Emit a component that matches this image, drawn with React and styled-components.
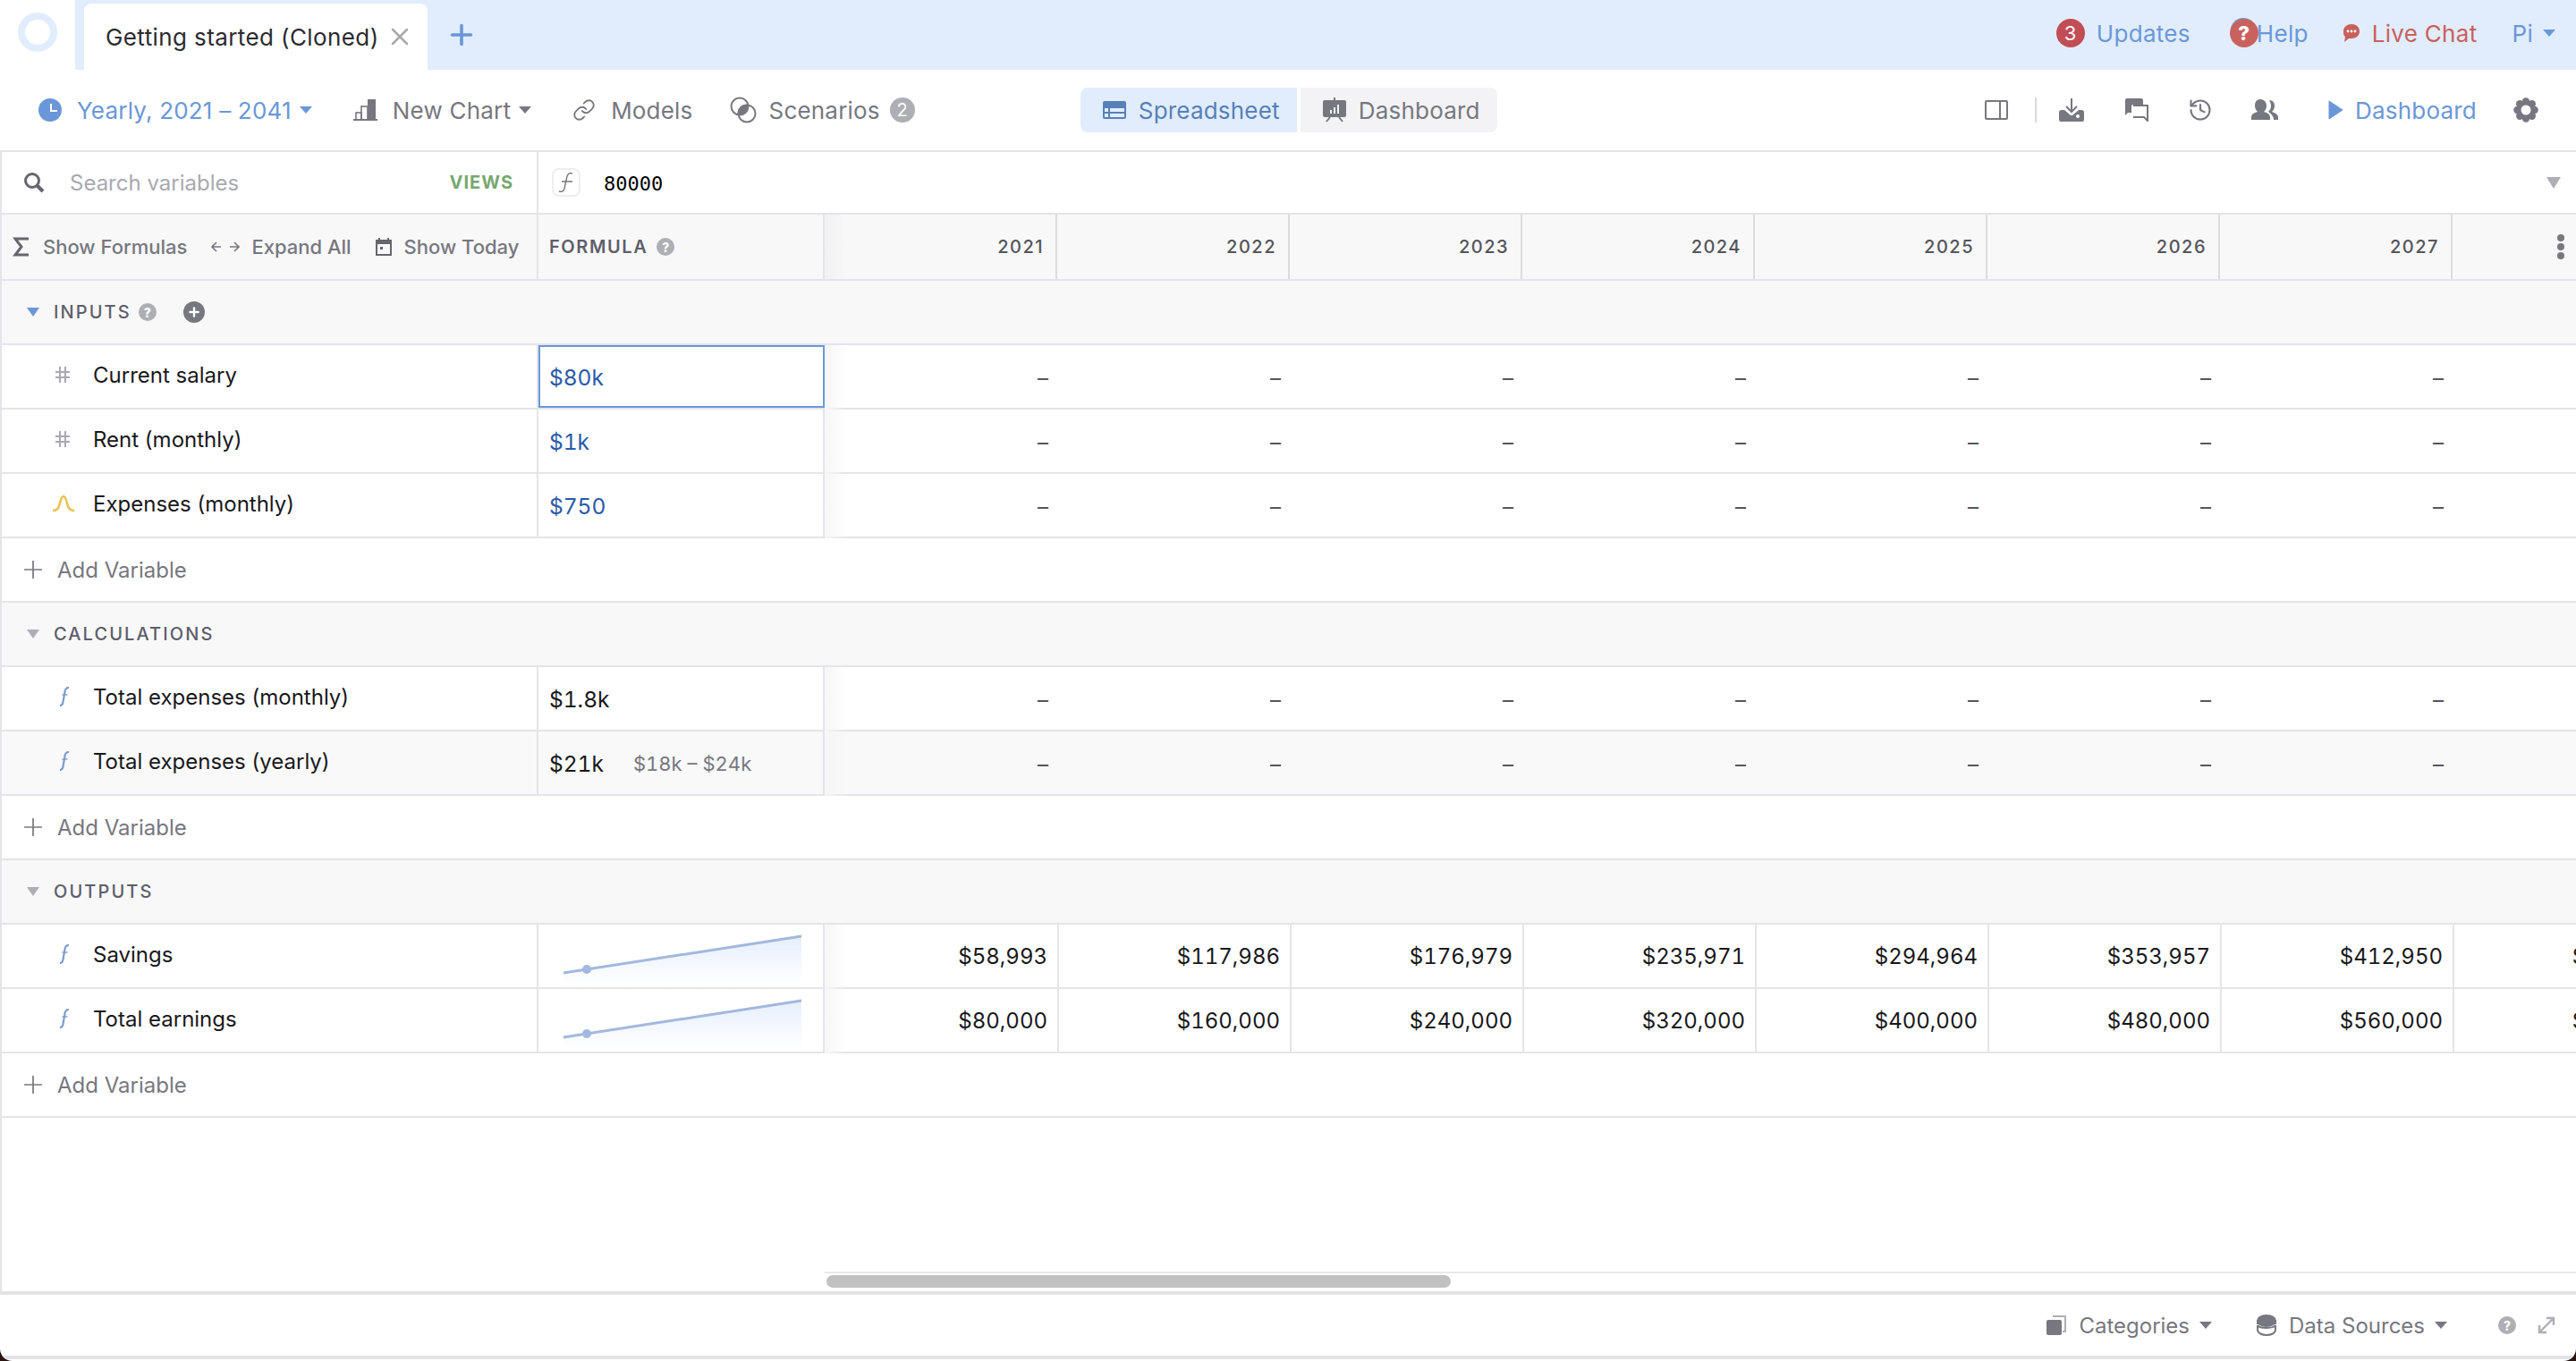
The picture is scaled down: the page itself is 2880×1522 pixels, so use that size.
import React from "react";
import styled, { createGlobalStyle } from "styled-components";
import { Link, History, Plus, X } from "lucide-react";

const GlobalStyle = createGlobalStyle`
  html, body { margin: 0; padding: 0; background: #2a1510; }
  * { box-sizing: border-box; }
`;

const BLUE = "#6a97d8";
const GREY = "#77777f";
const LINE = "#e4e4ea";

const Page = styled.div`
  width: 2880px;
  height: 1522px;
  display: flex;
  flex-direction: column;
  background: #fff;
  border-radius: 0 0 14px 14px;
  overflow: hidden;
  font-family: Inter, "Noto Sans", sans-serif;
  font-size: 24px;
  color: #18181b;
`;

/* tab strip */
const TabBar = styled.div`
  height: 78px;
  flex: none;
  display: flex;
  background: #e1edfc;
  font-size: 26px;
`;
const LogoSlot = styled.div`
  width: 84px;
  background: #fff;
  display: flex;
  align-items: center;
  justify-content: center;
  padding-bottom: 6px;
`;
const Ring = styled.div`
  width: 44px;
  height: 44px;
  border-radius: 50%;
  border: 8px solid #e1edfc;
`;
const DocTab = styled.div`
  width: 384px;
  margin: 4px 0 0 10px;
  padding-left: 24px;
  background: #fff;
  border-radius: 8px 8px 0 0;
  display: flex;
  align-items: center;
  gap: 7px;
  color: #2b2b30;
  letter-spacing: 0.4px;
  svg { color: #a9a9ae; }
`;
const AddTab = styled.div`
  margin-left: 20px;
  display: flex;
  align-items: center;
  color: ${BLUE};
`;
const TopLinks = styled.div`
  margin-left: auto;
  padding-right: 23px;
  display: flex;
  align-items: center;
  padding-bottom: 4px;
  letter-spacing: 0.3px;
`;
const TopLink = styled.div`
  display: flex;
  align-items: center;
  gap: ${(p) => p.$gap ?? 13}px;
  margin-left: ${(p) => p.$left ?? 0}px;
  color: ${(p) => p.$color ?? BLUE};
`;
const CountBadge = styled.span`
  width: 32px;
  height: 32px;
  border-radius: 50%;
  background: ${(p) => p.$bg};
  color: #fff;
  font-size: ${(p) => p.$size ?? 22}px;
  font-weight: ${(p) => p.$weight ?? 400};
  display: flex;
  align-items: center;
  justify-content: center;
  box-shadow: ${(p) => p.$shadow ?? "none"};
  position: relative;
  margin-right: ${(p) => p.$right ?? 0}px;
`;

const Caret = styled.span`
  width: 0;
  height: 0;
  flex: none;
  border-left: ${(p) => (p.$size ?? 14) / 2}px solid transparent;
  border-right: ${(p) => (p.$size ?? 14) / 2}px solid transparent;
  border-top: ${(p) => (p.$size ?? 14) * (p.$ratio ?? 0.58)}px solid ${(p) => p.$color ?? GREY};
  margin-left: ${(p) => p.$left ?? 0}px;
`;

/* main toolbar */
const Toolbar = styled.div`
  height: 92px;
  flex: none;
  display: flex;
  align-items: center;
  padding: 0 42px 0 43px;
  border-bottom: 2px solid ${LINE};
  font-size: 26px;
  letter-spacing: 0.2px;
`;
const ToolItem = styled.div`
  display: flex;
  align-items: center;
  gap: ${(p) => p.$gap ?? 17}px;
  margin-left: ${(p) => p.$left ?? 0}px;
  color: ${(p) => p.$color ?? GREY};
`;
const Count = styled.span`
  width: 28px;
  height: 28px;
  border-radius: 50%;
  background: #aeaeb5;
  color: #fff;
  font-size: 20px;
  display: flex;
  align-items: center;
  justify-content: center;
  margin-left: -3px;
`;
const ViewTabs = styled.div`
  display: flex;
  gap: 4px;
  margin-left: 185px;
`;
const ViewTab = styled.div`
  height: 50px;
  width: ${(p) => p.$width}px;
  padding-left: 25px;
  display: flex;
  align-items: center;
  gap: 14px;
  background: ${(p) => (p.$active ? "#e1edfc" : "#f3f3f5")};
  color: ${(p) => (p.$active ? "#5680b8" : GREY)};
  border-radius: ${(p) => (p.$active ? "8px 0 0 8px" : "0 8px 8px 0")};
`;
const ToolRight = styled.div`
  margin-left: auto;
  display: flex;
  align-items: center;
`;
const Divider = styled.span`
  width: 2px;
  height: 28px;
  background: #d8d8dd;
  margin: 0 25px 0 30px;
`;
const IconSlot = styled.span`
  display: flex;
  margin-left: ${(p) => p.$left ?? 0}px;
  color: ${GREY};
`;

/* formula bar */
const FormulaBar = styled.div`
  height: 70px;
  flex: none;
  display: flex;
  border-left: 2px solid ${LINE};
  border-bottom: 2px solid ${LINE};
`;
const SearchBox = styled.div`
  width: 598px;
  display: flex;
  align-items: center;
  padding: 0 26px 0 24px;
  gap: 28px;
  color: #a9a9b0;
`;
const Views = styled.span`
  margin-left: auto;
  color: #77a86f;
  font-weight: 700;
  font-size: 20px;
  letter-spacing: 1px;
`;
const FormulaInput = styled.div`
  flex: 1;
  display: flex;
  align-items: center;
  border-left: 2px solid ${LINE};
  padding: 0 17px 0 15px;
`;
const FnBox = styled.span`
  width: 32px;
  height: 32px;
  border: 2px solid #eeeef0;
  border-radius: 8px;
  display: flex;
  align-items: center;
  justify-content: center;
  color: ${GREY};
`;
const Mono = styled.span`
  margin-left: 26px;
  font-family: "DejaVu Sans Mono", monospace;
  font-size: 22px;
  color: #000;
  padding-top: 2px;
`;

/* sheet */
const Sheet = styled.div`
  flex: 1;
  min-height: 0;
  border-left: 2px solid ${LINE};
  overflow: hidden;
  display: flex;
  flex-direction: column;
`;
const HeadRow = styled.div`
  height: 74px;
  flex: none;
  display: flex;
  background: #f8f8f8;
  border-bottom: 2px solid ${LINE};
`;
const HeadTools = styled.div`
  width: 598px;
  flex: none;
  display: flex;
  align-items: center;
  padding-left: 12px;
  font-size: 22px;
  font-weight: 500;
  color: ${GREY};
`;
const HeadTool = styled.div`
  display: flex;
  align-items: center;
  gap: ${(p) => p.$gap}px;
  margin-left: ${(p) => p.$left ?? 0}px;
`;
const HeadFormula = styled.div`
  width: 322px;
  flex: none;
  display: flex;
  align-items: center;
  gap: 10px;
  padding-left: 12px;
  border-left: 2px solid ${LINE};
  border-right: 2px solid ${LINE};
  font-size: 20px;
  font-weight: 600;
  letter-spacing: 1.6px;
  color: #5e5e6b;
`;
const YearsHead = styled.div`
  display: flex;
  flex: none;
  background: linear-gradient(90deg, #f1f1f3, #f8f8f8) no-repeat left / 22px 100%;
`;
const YearHead = styled.div`
  width: 260px;
  flex: none;
  display: flex;
  align-items: center;
  justify-content: flex-end;
  padding-right: 13px;
  border-right: 2px solid #dcdcdf;
  font-size: 20px;
  font-weight: 500;
  letter-spacing: 1.5px;
  color: #55555c;
`;
const Kebab = styled.span`
  position: absolute;
  left: 2859px;
  top: 272px;
  width: 8px;
  height: 8px;
  border-radius: 50%;
  background: ${GREY};
  box-shadow: 0 -10px 0 ${GREY}, 0 10px 0 ${GREY};
`;

const GroupRow = styled.div`
  height: 72px;
  flex: none;
  display: flex;
  align-items: center;
  padding: 0 0 0 28px;
  background: #f8f8f8;
  border-bottom: 2px solid ${LINE};
`;
const GroupLabel = styled.span`
  margin-left: 16px;
  font-size: 20px;
  font-weight: 500;
  letter-spacing: 2.1px;
  color: #5e5e6b;
`;
const AddRow = styled.div`
  height: 72px;
  flex: none;
  display: flex;
  align-items: center;
  gap: 11px;
  padding-left: 19px;
  border-bottom: 2px solid ${LINE};
  color: ${GREY};
`;
const VarRow = styled.div`
  height: 72px;
  flex: none;
  display: flex;
  background: ${(p) => (p.$hover ? "#f9f9f9" : "#fff")};
  border-bottom: 2px solid ${LINE};
`;
const NameCell = styled.div`
  width: 598px;
  flex: none;
  display: flex;
  align-items: center;
  padding-left: 59px;
  padding-bottom: 4px;
`;
const TypeIcon = styled.span`
  width: 43px;
  flex: none;
  display: flex;
`;
const ValueCell = styled.div`
  width: 322px;
  flex: none;
  display: flex;
  align-items: center;
  gap: 33px;
  padding-left: 12px;
  padding-top: ${(p) => (p.$spark ? 0 : 1)}px;
  border-left: 2px solid ${LINE};
  border-right: 2px solid ${LINE};
  color: ${(p) => (p.$input ? "#2a5aa8" : "#18181b")};
  position: relative;
  font-size: 24.5px;
  font-variant-numeric: tabular-nums;
`;
const Selected = styled.span`
  position: absolute;
  left: 0;
  right: -2px;
  top: 0;
  bottom: 0;
  border: 2px solid ${BLUE};
`;
const Range = styled.span`
  font-size: 22px;
  color: ${GREY};
`;
const YearCells = styled.div`
  display: flex;
  flex: none;
  padding-left: 2px;
  margin-bottom: -2px;
  background: linear-gradient(90deg, #f6f6f7, rgba(255, 255, 255, 0)) no-repeat left / 24px 100%;
`;
const YearCell = styled.div`
  width: 260px;
  flex: none;
  display: flex;
  align-items: center;
  justify-content: flex-end;
  padding-right: ${(p) => (p.$filled ? 11 : 12)}px;
  padding-bottom: ${(p) => (p.$filled ? 2 : 0)}px;
  border-right: ${(p) => (p.$filled ? `2px solid ${LINE}` : "none")};
  color: ${(p) => (p.$filled ? "#18181b" : "#55555c")};
  font-variant-numeric: tabular-nums;
`;

const ScrollArea = styled.div`
  margin-top: auto;
  height: 22px;
  flex: none;
  margin-left: 920px;
  border-top: 2px solid #e8e8ec;
  padding-top: 2px;
`;
const Thumb = styled.div`
  width: 698px;
  height: 14px;
  margin-left: 2px;
  border-radius: 7px;
  background: #c1c1c1;
`;

/* footer */
const Footer = styled.div`
  height: 76px;
  flex: none;
  display: flex;
  align-items: center;
  justify-content: flex-end;
  border-top: 4px solid #e3e3e6;
  border-bottom: 4px solid #e3e3e6;
  padding-right: 23px;
  color: ${GREY};
`;
const BottomGap = styled.div`
  height: 2px;
  flex: none;
`;
const FootItem = styled.div`
  display: flex;
  align-items: center;
  gap: ${(p) => p.$gap ?? 14}px;
  margin-left: ${(p) => p.$left ?? 0}px;
`;
const HelpDot = styled.span`
  width: ${(p) => p.$size ?? 20}px;
  height: ${(p) => p.$size ?? 20}px;
  flex: none;
  border-radius: 50%;
  background: #aeaeb5;
  color: #fff;
  font-size: ${(p) => (p.$size ?? 20) - 6}px;
  font-weight: 800;
  letter-spacing: 0;
  display: flex;
  align-items: center;
  justify-content: center;
  margin-left: ${(p) => p.$left ?? 0}px;
`;
const PlusDot = styled.span`
  width: 24px;
  height: 24px;
  border-radius: 50%;
  background: ${GREY};
  color: #fff;
  display: flex;
  align-items: center;
  justify-content: center;
  margin-left: 30px;
`;

const ClockIcon = () => (
  <svg width="26" height="26" viewBox="0 0 26 26">
    <circle cx="13" cy="13" r="13" fill={BLUE} />
    <path d="M14 6v8h7" fill="none" stroke="#fff" strokeWidth="2" />
  </svg>
);
const BarsIcon = () => (
  <svg width="27" height="24" viewBox="0 0 27 24">
    <path d="M0 23h27" stroke={GREY} strokeWidth="2" />
    <rect x="3" y="15" width="6" height="8" fill="none" stroke={GREY} strokeWidth="1.6" />
    <rect x="9" y="8" width="7" height="15" fill="none" stroke={GREY} strokeWidth="1.6" />
    <rect x="16" y="0" width="9" height="23" fill={GREY} />
  </svg>
);
const ScenarioIcon = () => (
  <svg width="30" height="30" viewBox="0 0 30 30" fill="none" stroke={GREY} strokeWidth="2">
    <clipPath id="scn">
      <circle cx="11" cy="11" r="9.5" />
    </clipPath>
    <circle cx="19" cy="19" r="9.5" fill={GREY} clipPath="url(#scn)" />
    <circle cx="11" cy="11" r="9.5" />
    <circle cx="19" cy="19" r="9.5" />
  </svg>
);
const SheetIcon = () => (
  <svg width="26" height="20" viewBox="0 0 26 20">
    <rect width="26" height="20" rx="2" fill="#5680b8" />
    <path d="M2 8h4v4H2zM8 8h16v4H8zM2 14h4v4H2zM8 14h16v4H8z" fill="#e1edfc" />
  </svg>
);
const BoardIcon = () => (
  <svg width="26" height="28" viewBox="0 0 26 28">
    <rect x="12" y="0" width="2" height="4" fill={GREY} />
    <rect y="3" width="26" height="19" rx="2" fill={GREY} />
    <path d="M8 14h2v4H8zM12 11h2v7h-2zM16 8h2v10h-2z" fill="#f3f3f5" />
    <path d="M8 22l-4 5M18 22l4 5" stroke={GREY} strokeWidth="2" />
  </svg>
);
const PanelIcon = () => (
  <svg width="26" height="22" viewBox="0 0 26 22" fill="none" stroke={GREY} strokeWidth="2">
    <rect x="1" y="1" width="24" height="20" rx="1" />
    <path d="M17 1v20" />
  </svg>
);
const InboxIcon = () => (
  <svg width="28" height="26" viewBox="0 0 28 26">
    <path d="M14 0v14M8 9l6 6 6-6" fill="none" stroke={GREY} strokeWidth="2" />
    <path d="M3 13h3l7 6h2l7-6h3a3 3 0 0 1 3 3v8a2 2 0 0 1-2 2H2a2 2 0 0 1-2-2v-8a3 3 0 0 1 3-3z" fill={GREY} />
    <circle cx="21" cy="20" r="2" fill="#fff" />
  </svg>
);
const ChatIcon = () => (
  <svg width="26" height="26" viewBox="0 0 26 26">
    <path d="M2 0h16a2 2 0 0 1 2 2v5H9a2 2 0 0 0-2 2v7H3l-3 3V2a2 2 0 0 1 2-2z" fill={GREY} />
    <path d="M9 8h16v17l-4-4H9" fill="none" stroke={GREY} strokeWidth="2" />
  </svg>
);
const PeopleIcon = () => (
  <svg width="30" height="24" viewBox="0 0 30 24" fill={GREY}>
    <path d="M20 1c4 0 6 3 6 6 0 3-1 5-3 7 3 1 7 3 7 6v3h-5c0-4-3-7-6-9 2-2 3-4 3-7 0-2-1-4-2-6z" />
    <path d="M10 0c4 0 7 3 7 7 0 3-1 5-3 7 4 1 7 3 7 6v3H0v-3c0-3 3-5 7-6-2-2-3-4-3-7 0-4 2-7 6-7z" />
  </svg>
);
const PlayIcon = () => (
  <svg width="16" height="22" viewBox="0 0 16 22">
    <path d="M1 1l15 10L1 21z" fill={BLUE} stroke={BLUE} strokeLinejoin="round" />
  </svg>
);
const GearIcon = () => (
  <svg width="28" height="28" viewBox="0 0 28 28" fill={GREY}>
    {[0, 45, 90, 135, 180, 225, 270, 315].map((a) => (
      <circle key={a} cx={14 + 9.6 * Math.cos((a * Math.PI) / 180)} cy={14 + 9.6 * Math.sin((a * Math.PI) / 180)} r="4.2" />
    ))}
    <circle cx="14" cy="14" r="10" />
    <circle cx="14" cy="14" r="5.5" fill="#fff" />
  </svg>
);
const BubbleIcon = () => (
  <svg width="20" height="22" viewBox="0 0 20 22">
    <path d="M10 1c5 0 9 3 9 8s-4 8-9 8H7l-5 4 1-6C1 14 1 11 1 9c0-5 4-8 9-8z" fill="#c9605c" />
    <circle cx="6" cy="9" r="1.4" fill="#fff" />
    <circle cx="10" cy="9" r="1.4" fill="#fff" />
    <circle cx="14" cy="9" r="1.4" fill="#fff" />
  </svg>
);
const SearchIcon = () => (
  <svg width="24" height="24" viewBox="0 0 24 24" fill="none" stroke="#66666e">
    <circle cx="10" cy="10" r="7.5" strokeWidth="3" />
    <path d="M15 15l7 7" strokeWidth="4" />
  </svg>
);
const SigmaIcon = () => (
  <svg width="18" height="22" viewBox="0 0 18 22" fill="none" stroke="#66666e" strokeWidth="3">
    <path d="M18 2H3l7 9-7 9h15" />
  </svg>
);
const ArrowsIcon = () => (
  <svg width="32" height="14" viewBox="0 0 32 14" fill="none" stroke={GREY} strokeWidth="1.6">
    <path d="M11 7H1M6 2L1 7l5 5M21 7h10M26 2l5 5-5 5" />
  </svg>
);
const CalendarIcon = () => (
  <svg width="18" height="20" viewBox="0 0 18 20">
    <rect x="1" y="3" width="16" height="16" fill="none" stroke="#66666e" strokeWidth="2" />
    <rect x="1" y="2" width="16" height="5" fill="#66666e" />
    <rect x="3" y="0" width="2" height="3" fill="#66666e" />
    <rect x="13" y="0" width="2" height="3" fill="#66666e" />
    <rect x="5" y="10" width="3" height="3" fill="#66666e" />
  </svg>
);
const FnGlyph = () => (
  <svg width="20" height="22" viewBox="0 0 20 22" fill="none" stroke={GREY} strokeWidth="1.4">
    <path d="M17 1c-3-1-5 0-6 3L8 18c-1 3-3 4-6 3M5 10h12" />
  </svg>
);
const HashIcon = () => (
  <svg width="18" height="20" viewBox="0 0 18 20" stroke="#a9a9b0" strokeWidth="2" fill="none">
    <path d="M6 1v18M12 1v18M1 7h16M1 13h16" />
  </svg>
);
const BellIcon = () => (
  <svg width="26" height="20" viewBox="0 0 26 20" fill="none" stroke="#e9c44f" strokeWidth="2.6" style={{ marginLeft: -3 }}>
    <path d="M1 18c6 0 7-4 8.5-10S12 2 13 2s2 0 3.5 6S19 18 25 18" />
  </svg>
);
const FormulaIcon = () => (
  <svg width="13" height="22" viewBox="0 0 13 22" fill="none" stroke="#7d9ccf" strokeWidth="2.2" style={{ marginLeft: 4 }}>
    <path d="M12 1C9 1 8 3 7.6 5L5.5 17C5 20 4 21 2 21" />
    <path d="M4.5 9h6" strokeWidth="1.4" />
  </svg>
);
const CardsIcon = () => (
  <svg width="22" height="22" viewBox="0 0 22 22" fill="none">
    <path d="M7 1h14v17h-3" stroke="#aeaeb5" strokeWidth="2" />
    <rect x="0" y="5" width="17" height="17" rx="2" fill={GREY} />
  </svg>
);
const DbIcon = () => (
  <svg width="22" height="24" viewBox="0 0 22 24">
    <ellipse cx="11" cy="7" rx="11" ry="7" fill={GREY} />
    <rect y="6" width="22" height="5" fill={GREY} />
    <path d="M1 12c2 4 18 4 20 0M1 12v5M21 12v5M1 17c0 8 20 8 20 0" fill="none" stroke={GREY} strokeWidth="2" />
  </svg>
);
const ExpandIcon = () => (
  <svg width="20" height="20" viewBox="0 0 20 20" fill="none" stroke="#aeaeb5" strokeWidth="2.4">
    <path d="M3 17L17 3M10 2h8v8M2 10v8h8" />
  </svg>
);
const Sparkline = () => (
  <svg width="270" height="70" viewBox="0 0 270 70" style={{ marginLeft: 14 }}>
    <defs>
      <linearGradient id="spark" x1="0" y1="0" x2="0" y2="1">
        <stop offset="0" stopColor="#e6effd" />
        <stop offset="1" stopColor="#ffffff" />
      </linearGradient>
    </defs>
    <path d="M2 54L268 13V68H2z" fill="url(#spark)" />
    <path d="M2 54L268 13" stroke="#a3b8dd" strokeWidth="3" fill="none" />
    <circle cx="28" cy="50" r="5" fill="#a3b8dd" />
  </svg>
);

const YEARS = [2021, 2022, 2023, 2024, 2025, 2026, 2027];
const DASHES = YEARS.map(() => "–");

const GROUPS = [
  {
    name: "INPUTS",
    active: true,
    rows: [
      { name: "Current salary", icon: <HashIcon />, value: "$80k", input: true, selected: true, cells: DASHES },
      { name: "Rent (monthly)", icon: <HashIcon />, value: "$1k", input: true, cells: DASHES },
      { name: "Expenses (monthly)", icon: <BellIcon />, value: "$750", input: true, cells: DASHES },
    ],
  },
  {
    name: "CALCULATIONS",
    rows: [
      { name: "Total expenses (monthly)", icon: <FormulaIcon />, value: "$1.8k", cells: DASHES },
      { name: "Total expenses (yearly)", icon: <FormulaIcon />, value: "$21k", range: "$18k – $24k", hover: true, cells: DASHES },
    ],
  },
  {
    name: "OUTPUTS",
    rows: [
      {
        name: "Savings",
        icon: <FormulaIcon />,
        spark: true,
        filled: true,
        cells: ["$58,993", "$117,986", "$176,979", "$235,971", "$294,964", "$353,957", "$412,950", "$471,943"],
      },
      {
        name: "Total earnings",
        icon: <FormulaIcon />,
        spark: true,
        filled: true,
        cells: ["$80,000", "$160,000", "$240,000", "$320,000", "$400,000", "$480,000", "$560,000", "$640,000"],
      },
    ],
  },
];

export default function App() {
  return (
    <Page>
      <GlobalStyle />
      <TabBar>
        <LogoSlot>
          <Ring />
        </LogoSlot>
        <DocTab>
          Getting started (Cloned)
          <X size={32} strokeWidth={1.9} />
        </DocTab>
        <AddTab>
          <Plus size={36} strokeWidth={2.4} />
        </AddTab>
        <TopLinks>
          <TopLink>
            <CountBadge $bg="#c14d55">3</CountBadge>
            Updates
          </TopLink>
          <TopLink $left={44} $gap={0}>
            <CountBadge $bg="#c9625f" $weight={800} $right={-2} $shadow="-1px -3px 0 -2px #6a97d8">?</CountBadge>
            Help
          </TopLink>
          <TopLink $left={38} $gap={13} $color="#c9605c">
            <BubbleIcon />
            Live Chat
          </TopLink>
          <TopLink $left={39} $gap={11}>
            Pi
            <Caret $color={BLUE} />
          </TopLink>
        </TopLinks>
      </TabBar>

      <Toolbar>
        <ToolItem $color={BLUE}>
          <ClockIcon />
          Yearly, 2021 – 2041
          <Caret $color={BLUE} $left={-8} />
        </ToolItem>
        <ToolItem $left={46}>
          <BarsIcon />
          New Chart
          <Caret $left={-8} />
        </ToolItem>
        <ToolItem $left={46}>
          <Link size={26} strokeWidth={1.7} />
          Models
        </ToolItem>
        <ToolItem $left={41} $gap={14}>
          <ScenarioIcon />
          Scenarios
          <Count>2</Count>
        </ToolItem>
        <ViewTabs>
          <ViewTab $active $width={242}>
            <SheetIcon />
            Spreadsheet
          </ViewTab>
          <ViewTab $width={220}>
            <BoardIcon />
            Dashboard
          </ViewTab>
        </ViewTabs>
        <ToolRight>
          <IconSlot>
            <PanelIcon />
          </IconSlot>
          <Divider />
          <IconSlot>
            <InboxIcon />
          </IconSlot>
          <IconSlot $left={46}>
            <ChatIcon />
          </IconSlot>
          <IconSlot $left={44}>
            <History size={28} strokeWidth={1.8} />
          </IconSlot>
          <IconSlot $left={43}>
            <PeopleIcon />
          </IconSlot>
          <ToolItem $left={56} $gap={14} $color={BLUE}>
            <PlayIcon />
            Dashboard
          </ToolItem>
          <IconSlot $left={41}>
            <GearIcon />
          </IconSlot>
        </ToolRight>
      </Toolbar>

      <FormulaBar>
        <SearchBox>
          <SearchIcon />
          Search variables
          <Views>VIEWS</Views>
        </SearchBox>
        <FormulaInput>
          <FnBox>
            <FnGlyph />
          </FnBox>
          <Mono>80000</Mono>
          <Caret $size={16} $ratio={0.85} $color="#aeaeb5" style={{ marginLeft: "auto" }} />
        </FormulaInput>
      </FormulaBar>

      <Sheet>
        <HeadRow>
          <HeadTools>
            <HeadTool $gap={16}>
              <SigmaIcon />
              Show Formulas
            </HeadTool>
            <HeadTool $gap={13} $left={27}>
              <ArrowsIcon />
              Expand All
            </HeadTool>
            <HeadTool $gap={14} $left={27}>
              <CalendarIcon />
              Show Today
            </HeadTool>
          </HeadTools>
          <HeadFormula>
            FORMULA
            <HelpDot>?</HelpDot>
          </HeadFormula>
          <YearsHead>
            {YEARS.map((y) => (
              <YearHead key={y}>{y}</YearHead>
            ))}
          </YearsHead>
          <Kebab />
        </HeadRow>

        {GROUPS.map((group) => (
          <React.Fragment key={group.name}>
            <GroupRow>
              <Caret $ratio={0.72} $color={group.active ? BLUE : "#aeaeb5"} />
              <GroupLabel>{group.name}</GroupLabel>
              {group.active && (
                <>
                  <HelpDot $left={8}>?</HelpDot>
                  <PlusDot>
                    <Plus size={16} strokeWidth={3.5} />
                  </PlusDot>
                </>
              )}
            </GroupRow>
            {group.rows.map((row) => (
              <VarRow key={row.name} $hover={row.hover}>
                <NameCell>
                  <TypeIcon>{row.icon}</TypeIcon>
                  {row.name}
                </NameCell>
                <ValueCell $input={row.input} $spark={row.spark}>
                  {row.spark ? <Sparkline /> : row.value}
                  {row.range && <Range>{row.range}</Range>}
                  {row.selected && <Selected />}
                </ValueCell>
                <YearCells>
                  {row.cells.map((c, i) => (
                    <YearCell key={i} $filled={row.filled}>
                      {c}
                    </YearCell>
                  ))}
                </YearCells>
              </VarRow>
            ))}
            <AddRow>
              <Plus size={32} strokeWidth={1.3} />
              Add Variable
            </AddRow>
          </React.Fragment>
        ))}

        <ScrollArea>
          <Thumb />
        </ScrollArea>
      </Sheet>

      <Footer>
        <FootItem>
          <CardsIcon />
          Categories
          <Caret $left={-3} />
        </FootItem>
        <FootItem $left={50}>
          <DbIcon />
          Data Sources
          <Caret $left={-3} />
        </FootItem>
        <HelpDot $left={57}>?</HelpDot>
        <FootItem $left={24}>
          <ExpandIcon />
        </FootItem>
      </Footer>
      <BottomGap />
    </Page>
  );
}
